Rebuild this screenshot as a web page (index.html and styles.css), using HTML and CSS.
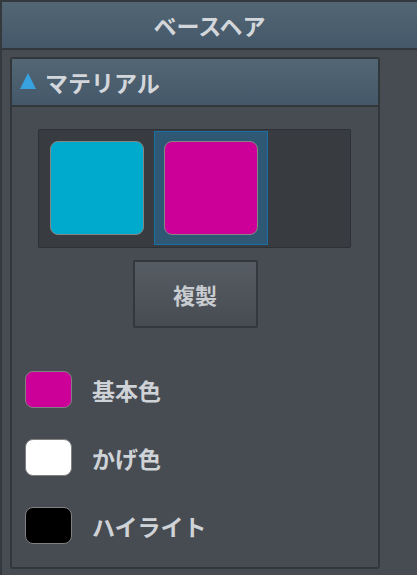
FILE: index.html
```html
<!DOCTYPE html>
<html lang="ja">

<head>
    <meta charset="UTF-8">
    <meta name="viewport" content="width=device-width, initial-scale=1.0">
    <title>ベースヘア</title>
    <link rel="stylesheet" href="styles.css">
</head>

<body>

    <div class="window">
        <header class="window-title">ベースヘア</header>

        <section class="panel">
            <div class="panel-header">
                <span class="toggle"></span>
                <span>マテリアル</span>
            </div>

            <div class="panel-body">
                <div class="material-tray">
                    <div class="material-cell">
                        <div class="material-swatch cyan"></div>
                    </div>
                    <div class="material-cell selected">
                        <div class="material-swatch magenta"></div>
                    </div>
                </div>

                <button class="copy-button">複製</button>

                <ul class="color-list">
                    <li class="color-row">
                        <span class="color-chip magenta"></span>
                        <span>基本色</span>
                    </li>
                    <li class="color-row">
                        <span class="color-chip white"></span>
                        <span>かげ色</span>
                    </li>
                    <li class="color-row">
                        <span class="color-chip black"></span>
                        <span>ハイライト</span>
                    </li>
                </ul>
            </div>
        </section>
    </div>

</body>

</html>
```

FILE: styles.css
```css
body {
    font-family: 'Noto Sans CJK JP', 'Noto Sans', sans-serif;
    margin: 0;
    padding: 0;
    background-color: #474c53;
    color: #cfd3d7;
}

.window {
    width: 417px;
    height: 575px;
    box-sizing: border-box;
    border-left: 2px solid #34393d;
    border-top: 2px solid #34393d;
    overflow: hidden;
}

.window-title {
    height: 46px;
    border-bottom: 2px solid #32373b;
    background: linear-gradient(#526674, #44586a);
    display: flex;
    align-items: center;
    justify-content: center;
    font-size: 23px;
    font-weight: bold;
    color: #d3d7db;
}

.panel {
    margin: 7px 0 0 8px;
    width: 370px;
    height: 512px;
    box-sizing: border-box;
    border: 2px solid #32373b;
    border-radius: 3px;
}

.panel-header {
    height: 46px;
    border-bottom: 2px solid #32373b;
    background: linear-gradient(#526674, #44586a);
    display: flex;
    align-items: center;
    gap: 9px;
    padding-left: 8px;
    font-size: 23px;
    font-weight: bold;
    color: #d3d7db;
}

.toggle {
    width: 0;
    height: 0;
    margin-bottom: 3px;
    border-left: 8px solid transparent;
    border-right: 8px solid transparent;
    border-bottom: 16px solid #38a2e0;
}

.panel-body {
    display: flex;
    flex-direction: column;
    align-items: center;
    padding-top: 22px;
}

.material-tray {
    align-self: flex-start;
    margin-left: 26px;
    width: 313px;
    height: 119px;
    box-sizing: border-box;
    padding: 1px;
    background-color: #383c41;
    border: 1px solid #2d3135;
    border-radius: 2px;
    display: flex;
}

.material-cell {
    width: 114px;
    height: 114px;
    box-sizing: border-box;
    border: 1px solid transparent;
    padding: 9px;
}

.material-cell.selected {
    background-color: #2f5874;
    border-color: #1a6ea3;
}

.material-swatch {
    width: 94px;
    height: 94px;
    box-sizing: border-box;
    border: 1px solid #858585;
    border-radius: 8px;
}

.cyan {
    background-color: #00aacd;
}

.magenta {
    background-color: #cc0099;
}

.white {
    background-color: #ffffff;
}

.black {
    background-color: #000000;
}

.copy-button {
    margin-top: 12px;
    width: 125px;
    height: 68px;
    border: 2px solid #34383c;
    border-radius: 2px;
    background: linear-gradient(#565c63, #474c53);
    font-family: inherit;
    font-size: 22px;
    font-weight: bold;
    color: #c9cdd1;
}

.color-list {
    list-style: none;
    align-self: stretch;
    margin: 43px 0 0 0;
    padding: 0 0 0 13px;
    display: flex;
    flex-direction: column;
    gap: 31px;
}

.color-row {
    display: flex;
    align-items: center;
    gap: 20px;
    height: 37px;
    font-size: 23px;
    font-weight: bold;
    color: #cfd3d7;
}

.color-chip {
    width: 47px;
    height: 37px;
    box-sizing: border-box;
    border: 1px solid #808080;
    border-radius: 8px;
}
```
